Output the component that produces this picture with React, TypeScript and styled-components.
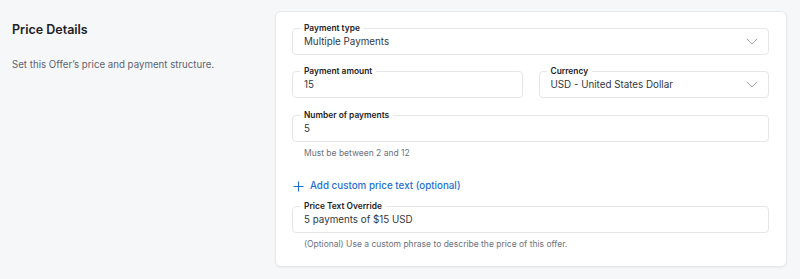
import React from "react";
import styled, { createGlobalStyle } from "styled-components";

const GlobalStyle = createGlobalStyle`
  html, body {
    margin: 0;
    padding: 0;
    background: #f6f7f9;
    font-family: Inter, "Noto Sans", "Liberation Sans", sans-serif;
    -webkit-font-smoothing: antialiased;
  }
`;

const Page = styled.div`
  display: flex;
  align-items: flex-start;
  padding: 11px 13px 13px 12px;
  width: 800px;
  box-sizing: border-box;
`;

const Aside = styled.div`
  width: 263px;
  flex-shrink: 0;
  padding-top: 10px;
`;

const Title = styled.h2`
  margin: 0;
  font-size: 12.5px;
  line-height: 17px;
  font-weight: 600;
  color: #1d2125;
`;

const Subtitle = styled.p`
  margin: 20px 0 0;
  font-size: 9.7px;
  line-height: 14px;
  color: #5c6370;
`;

const Card = styled.div`
  flex: 1;
  background: #fff;
  border: 1px solid #e6e8eb;
  border-radius: 6px;
  box-shadow: 0 1px 2px rgba(16, 24, 40, 0.05);
  padding: 16px 17px 16px 16px;
  display: flex;
  flex-direction: column;
`;

const Row = styled.div<{ $mt?: number }>`
  display: flex;
  gap: 16px;
  margin-top: ${({ $mt }) => $mt ?? 0}px;
`;

const FieldBox = styled.div`
  position: relative;
  flex: 1;
  height: 27px;
  border: 1px solid #e4e6ea;
  border-radius: 4px;
  box-sizing: border-box;
  display: flex;
  align-items: center;
  padding: 0 10px 0 11px;
`;

const FieldLabel = styled.span`
  position: absolute;
  top: -6px;
  left: 7px;
  padding: 0 4px;
  background: #fff;
  font-size: 8.4px;
  line-height: 11px;
  font-weight: 600;
  color: #1d2125;
`;

const FieldValue = styled.span`
  flex: 1;
  font-size: 9.8px;
  color: #33383f;
`;

const Helper = styled.div`
  margin-top: 5px;
  padding-left: 12px;
  font-size: 8.5px;
  line-height: 12px;
  color: #6b7280;
`;

const AddLink = styled.button`
  margin-top: 20px;
  align-self: flex-start;
  display: flex;
  align-items: center;
  gap: 6px;
  padding: 0 0 0 1px;
  border: 0;
  background: none;
  font-family: inherit;
  font-size: 9.8px;
  line-height: 14px;
  font-weight: 500;
  color: #1f6fd1;
  cursor: pointer;
`;

const Chevron = () => (
  <svg width="12" height="7" viewBox="0 0 12 7" fill="none">
    <path d="M0.8 0.8l5.2 5L11.2 0.8" stroke="#9aa0a8" strokeWidth="1" />
  </svg>
);

const Plus = () => (
  <svg width="11" height="11" viewBox="0 0 11 11" fill="none">
    <path d="M5.5 0.5v10M0.5 5.5h10" stroke="#1f6fd1" strokeWidth="1.2" />
  </svg>
);

type FieldProps = {
  label: string;
  value: string;
  select?: boolean;
};

const Field = ({ label, value, select }: FieldProps) => (
  <FieldBox>
    <FieldLabel>{label}</FieldLabel>
    <FieldValue>{value}</FieldValue>
    {select && <Chevron />}
  </FieldBox>
);

export default function App() {
  return (
    <>
      <GlobalStyle />
      <Page>
        <Aside>
          <Title>Price Details</Title>
          <Subtitle>Set this Offer’s price and payment structure.</Subtitle>
        </Aside>
        <Card>
          <Row>
            <Field label="Payment type" value="Multiple Payments" select />
          </Row>
          <Row $mt={16}>
            <Field label="Payment amount" value="15" />
            <Field label="Currency" value="USD - United States Dollar" select />
          </Row>
          <Row $mt={17}>
            <Field label="Number of payments" value="5" />
          </Row>
          <Helper>Must be between 2 and 12</Helper>
          <AddLink>
            <Plus />
            Add custom price text (optional)
          </AddLink>
          <Row $mt={13}>
            <Field label="Price Text Override" value="5 payments of $15 USD" />
          </Row>
          <Helper>(Optional) Use a custom phrase to describe the price of this offer.</Helper>
        </Card>
      </Page>
    </>
  );
}
